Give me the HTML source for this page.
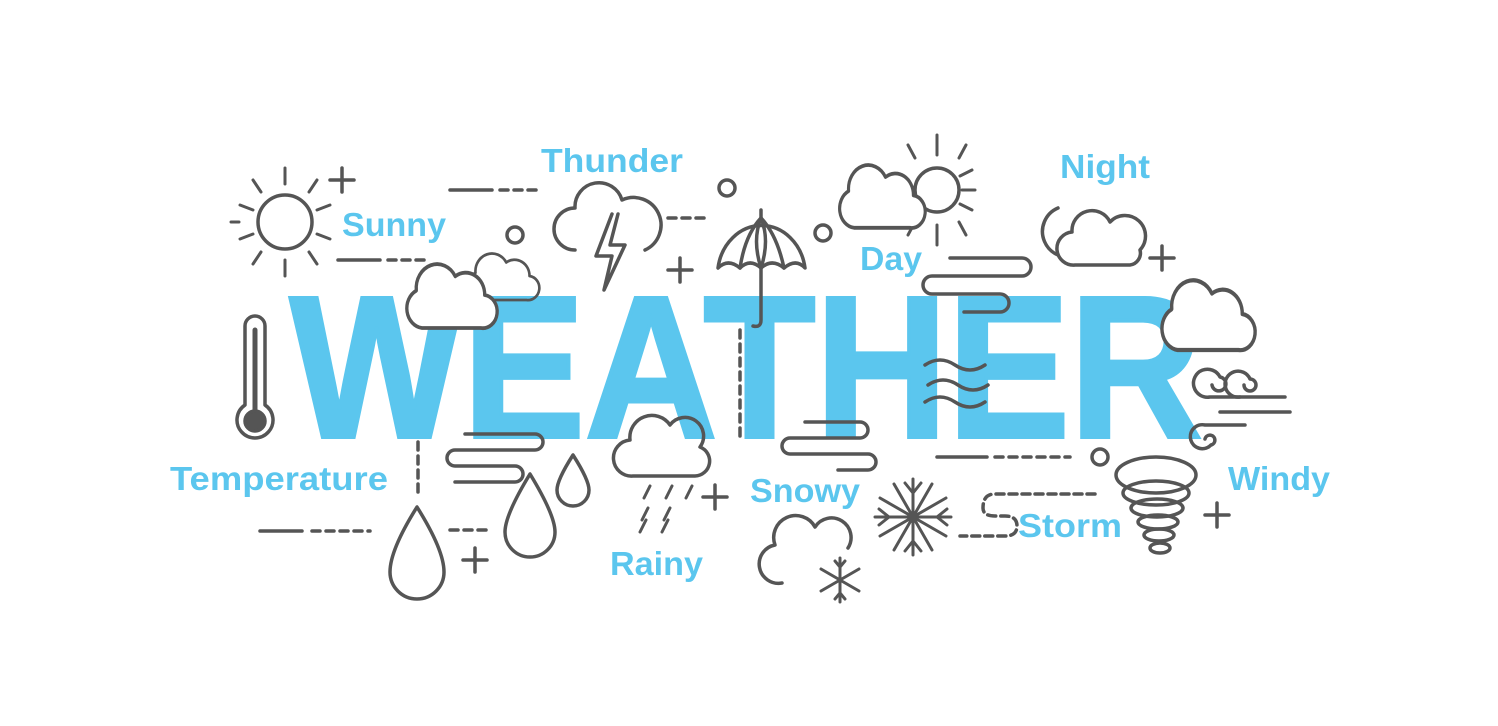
<!DOCTYPE html>
<html><head><meta charset="utf-8"><style>
html,body{margin:0;padding:0;background:#fff;width:1498px;height:726px;overflow:hidden}
svg{display:block}
.l{font-family:"Liberation Sans",Arial,sans-serif;font-weight:bold;fill:#5bc6ee}
</style></head><body>
<svg width="1498" height="726" viewBox="0 0 1498 726" xmlns="http://www.w3.org/2000/svg">
<defs>
<path id="cl" d="M20,60 A18,18 0 0 1 14,26 A22,22 0 0 1 55,13 A20,20 0 0 1 86,30 A15,15 0 0 1 82,60 Z"/>
</defs>
<text class="l" x="290" y="437" font-size="202" textLength="912" lengthAdjust="spacingAndGlyphs" stroke="#5bc6ee" stroke-width="4">WEATHER</text>
<g class="l" font-size="33" lengthAdjust="spacingAndGlyphs">
<text x="541" y="172" textLength="142" lengthAdjust="spacingAndGlyphs">Thunder</text>
<text x="342" y="236" textLength="104" lengthAdjust="spacingAndGlyphs">Sunny</text>
<text x="1060" y="178" textLength="90" lengthAdjust="spacingAndGlyphs">Night</text>
<text x="860" y="270" textLength="62" lengthAdjust="spacingAndGlyphs">Day</text>
<text x="170" y="490" textLength="218" lengthAdjust="spacingAndGlyphs">Temperature</text>
<text x="750" y="502" textLength="110" lengthAdjust="spacingAndGlyphs">Snowy</text>
<text x="1228" y="490" textLength="102" lengthAdjust="spacingAndGlyphs">Windy</text>
<text x="1018" y="537" textLength="104" lengthAdjust="spacingAndGlyphs">Storm</text>
<text x="610" y="575" textLength="93" lengthAdjust="spacingAndGlyphs">Rainy</text>
</g>
<g fill="none" stroke="#555" stroke-width="3.5" stroke-linecap="round" stroke-linejoin="round">
<circle cx="285" cy="222" r="27"/>
<g stroke-width="3">
<line x1="285" y1="168" x2="285" y2="184"/><line x1="285" y1="260" x2="285" y2="276"/>
<line x1="239" y1="222" x2="231" y2="222"/>
<line x1="253" y1="180" x2="261" y2="192"/><line x1="317" y1="180" x2="309" y2="192"/>
<line x1="253" y1="264" x2="261" y2="252"/><line x1="317" y1="264" x2="309" y2="252"/>
<line x1="240" y1="205" x2="253" y2="210"/><line x1="330" y1="205" x2="317" y2="210"/>
<line x1="240" y1="239" x2="253" y2="234"/><line x1="330" y1="239" x2="317" y2="234"/>
</g>
<path d="M342,168v24M330,180h24"/>
<path d="M450,190h42" /><path d="M500,190h40" stroke-dasharray="8 6"/>
<path d="M338,260h42" /><path d="M388,260h40" stroke-dasharray="8 6"/>
<circle cx="515" cy="235" r="8"/>
<use href="#cl" transform="translate(465,252) scale(0.75,0.8)"/>
<use href="#cl" transform="translate(403,262) scale(0.95,1.1)" fill="#fff"/>
<path d="M575,250 A16,16 0 0 1 575,208 A24,24 0 0 1 622,200 A18,18 0 0 1 645,250"/>
<path d="M612,214 L596,256 L612,256 L604,290 L625,245 L610,245 L618,214"/>
<path d="M668,218h40" stroke-dasharray="8 6"/>
<path d="M680,258v24M668,270h24"/>
<circle cx="727" cy="188" r="8"/>
<path d="M718,268 A44,50 0 0 1 805,268 Q796,258 784,268 Q772,258 761,268 Q750,258 740,268 Q728,258 718,268Z"/>
<path d="M761,268 Q752,240 761,218 M761,268 Q770,240 761,218 M740,268 Q745,235 761,218 M784,268 Q777,235 761,218"/>
<path d="M761,210v8M761,268v52q0,8 -8,6"/>
<circle cx="823" cy="233" r="8"/>
<circle cx="937" cy="190" r="22"/>
<g stroke-width="3"><line x1="937" y1="135" x2="937" y2="155"/><line x1="937" y1="225" x2="937" y2="245"/><line x1="975" y1="190" x2="962" y2="190"/><line x1="908" y1="145" x2="915" y2="158"/><line x1="966" y1="145" x2="959" y2="158"/><line x1="966" y1="235" x2="959" y2="222"/><line x1="908" y1="235" x2="915" y2="222"/><line x1="972" y1="170" x2="960" y2="176"/><line x1="972" y1="210" x2="960" y2="204"/></g>
<use href="#cl" transform="translate(836,163) scale(0.9,1.08)" fill="#fff"/>
<path d="M1058,208 A24,24 0 1 0 1078,255 A20,20 0 0 1 1058,208Z"/>
<path d="M1075,265 A14,14 0 0 1 1072,232 A20,20 0 0 1 1110,222 A17,17 0 0 1 1140,250 A12,12 0 0 1 1130,265 Z" fill="#fff"/>
<path d="M1162,246v24M1150,258h24"/>
<path d="M950,258h72a9,9 0 0 1 0,18h-90a9,9 0 0 0 0,18h68a9,9 0 0 1 0,18h-36" />
<use href="#cl" transform="translate(1158,278) scale(0.98,1.2)" fill="#fff"/>
<path d="M925,365 q15,-10 30,0 t30,0 M928,385 q15,-10 30,0 t30,0 M925,402 q15,-10 30,0 t30,0"/>
<path d="M1285,397h-75 a14,14 0 1 1 10,-20 a7,7 0 1 1 -8,8"/>
<path d="M1290,412h-70"/>
<path d="M1240,397 a13,13 0 1 1 10,-18 a6,6 0 1 1 -6,6"/>
<path d="M1245,425h-40 a12,12 0 1 0 6,20 a5,5 0 1 0 -6,-6"/>
<path d="M245,405V326a10,10 0 0 1 20,0V405a18,18 0 1 1 -20,0Z"/>
<path d="M255,330v88" stroke-width="5"/>
<circle cx="255" cy="421" r="10" fill="#555"/>
<path d="M418,442v50" stroke-dasharray="8 6"/>
<path d="M740,330v108" stroke-dasharray="8 6"/>
<path d="M465,434h70a8,8 0 0 1 0,16h-80a8,8 0 0 0 0,16h60a8,8 0 0 1 0,16h-60"/>
<path d="M417,507 Q390,550 390,572 a27,27 0 0 0 54,0 Q444,550 417,507Z"/>
<path d="M530,474 Q505,515 505,532 a25,25 0 0 0 50,0 Q555,515 530,474Z"/>
<path d="M573,455 Q557,480 557,490 a16,16 0 0 0 32,0 Q589,480 573,455Z"/>
<path d="M475,548v24M463,560h24"/>
<path d="M260,531h42"/><path d="M312,531h58" stroke-dasharray="8 6"/>
<path d="M450,530h40" stroke-dasharray="8 6"/>
<path d="M633,476 A16,16 0 0 1 630,440 A22,22 0 0 1 670,425 A18,18 0 0 1 700,447 A15,15 0 0 1 695,476Z"/>
<path d="M650,486l-6,12M672,486l-6,12M692,486l-6,12M648,508l-6,12M670,508l-6,12M646,520l-6,12M668,520l-6,12" stroke-width="3"/>
<path d="M715,485v24M703,497h24"/>
<path d="M805,422h55a8,8 0 0 1 0,16h-70a8,8 0 0 0 0,16h78a8,8 0 0 1 0,16h-30"/>
<path d="M782,583 A16,16 0 0 1 775,545 A22,22 0 0 1 815,527 A18,18 0 0 1 848,548"/>
<g stroke-width="3" transform="translate(840,580)">
<path d="M0,-22V22M-19,-11L19,11M-19,11L19,-11"/>
<path d="M-5,-19L0,-13L5,-19M-5,19L0,13L5,19"/>
</g>
<g stroke-width="3" transform="translate(913,517)">
<path d="M0,-38V38M-33,-19L33,19M-33,19L33,-19M-19,-33L19,33M19,-33L-19,33M-38,0H38"/>
<path d="M-8,-34L0,-24L8,-34M-8,34L0,24L8,34M-34,-8L-24,0L-34,8M34,-8L24,0L34,8"/>
</g>
<path d="M937,457h50"/><path d="M995,457h75" stroke-dasharray="8 6"/>
<circle cx="1100" cy="457" r="8"/>
<path d="M1095,494h-100q-12,0 -12,14 q0,8 12,8 h10 q12,0 12,10 q0,10 -12,10 h-45" stroke-dasharray="8 5"/>
<ellipse cx="1156" cy="475" rx="40" ry="18"/>
<ellipse cx="1156" cy="493" rx="33" ry="12"/>
<ellipse cx="1157" cy="508" rx="26" ry="9"/>
<ellipse cx="1158" cy="522" rx="20" ry="7"/>
<ellipse cx="1159" cy="535" rx="15" ry="6"/>
<ellipse cx="1160" cy="548" rx="10" ry="5"/>
<path d="M1217,503v24M1205,515h24"/>
</g>
</svg>
</body></html>
